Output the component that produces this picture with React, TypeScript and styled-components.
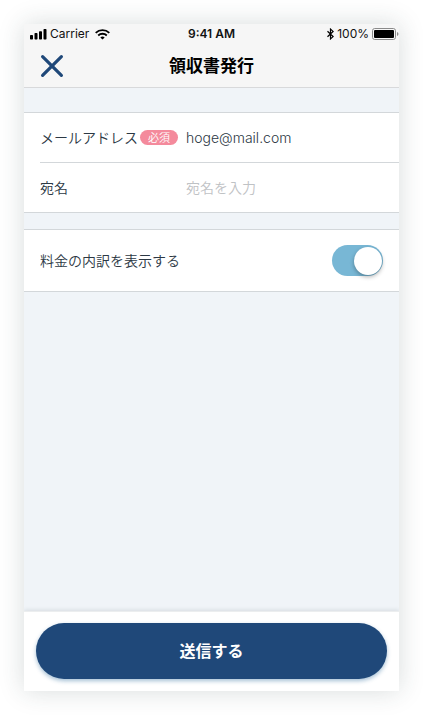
import React, { useState } from "react";
import styled, { createGlobalStyle } from "styled-components";

const GlobalStyle = createGlobalStyle`
  *, *::before, *::after { box-sizing: border-box; }
  body {
    margin: 0;
    background: #fff;
    color: #2c3844;
    font-family: Inter, "Noto Sans CJK JP", sans-serif;
    font-size: 14px;
    line-height: 20px;
  }
  button, input { font: inherit; color: inherit; }
`;

const Page = styled.div`
  display: flex;
  min-height: 100vh;
  padding: 24px;
`;

const Screen = styled.form`
  flex: 1;
  min-width: 0;
  display: flex;
  flex-direction: column;
  background: #f0f4f8;
  box-shadow: 0 0 24px rgba(40, 60, 60, 0.18);
`;

const Header = styled.header`
  background: #f6f6f6;
  border-bottom: 1px solid #d8d9db;
`;

const StatusBar = styled.div`
  display: grid;
  grid-template-columns: 1fr auto 1fr;
  align-items: center;
  height: 20px;
  padding: 0 0 0 6px;
  color: #111;
  font-size: 12px;
`;

const StatusGroup = styled.div<{ $end?: boolean }>`
  display: flex;
  align-items: center;
  justify-content: ${(p) => (p.$end ? "flex-end" : "flex-start")};
  gap: 3px;

  svg { flex: none; }
`;

const Carrier = styled.span`
  margin-right: 3px;
`;

const Clock = styled.time`
  margin-right: 6px;
  font-weight: 600;
`;

const NavBar = styled.div`
  display: grid;
  grid-template-columns: 56px 1fr 56px;
  align-items: center;
  height: 43px;
`;

const CloseButton = styled.button`
  display: flex;
  align-items: center;
  justify-content: center;
  width: 56px;
  height: 43px;
  padding: 0;
  border: 0;
  background: none;
  cursor: pointer;
`;

const Title = styled.h1`
  margin: 0;
  padding-bottom: 2px;
  color: #000;
  font-family: "Noto Sans CJK JP", sans-serif;
  font-size: 17px;
  font-weight: 700;
  line-height: 24px;
  text-align: center;
`;

const Content = styled.main`
  flex: 1;
  display: flex;
  flex-direction: column;
  gap: 16px;
  padding: 24px 0 16px;
`;

const Group = styled.section`
  padding-left: 16px;
  background: #fff;
  border: solid #d3d7da;
  border-width: 1px 0;
`;

const Row = styled.div`
  display: grid;
  grid-template-columns: 138px 1fr;
  gap: 8px;
  align-items: center;
  height: 49px;
  padding-right: 16px;

  & + & {
    height: 50px;
    border-top: 1px solid #d3d7da;
  }
`;

const FieldLabel = styled.label`
  display: flex;
  align-items: center;
  justify-content: space-between;
  font-weight: 350;
  white-space: nowrap;
`;

const Badge = styled.span`
  width: 38px;
  border-radius: 8px;
  background: #f48a9c;
  color: #fff;
  font-family: "Noto Sans CJK JP", sans-serif;
  font-size: 11px;
  line-height: 15px;
  text-align: center;
`;

const TextInput = styled.input`
  width: 100%;
  min-width: 0;
  padding: 0;
  border: 0;
  outline: 0;
  background: none;
  font-weight: 350;

  &::placeholder { color: #bfc2c5; opacity: 1; }
`;

const SwitchRow = styled.div`
  display: flex;
  align-items: center;
  justify-content: space-between;
  height: 61px;
  padding-right: 16px;
`;

const Switch = styled.input`
  appearance: none;
  display: flex;
  align-items: center;
  justify-content: flex-start;
  width: 51px;
  height: 31px;
  margin: 0;
  padding: 0 1px 0 2px;
  border-radius: 16px;
  background: #c8d0d5;
  cursor: pointer;

  &::before {
    content: "";
    width: 28px;
    height: 28px;
    border-radius: 50%;
    background: #fff;
    box-shadow: 0 2px 4px rgba(0, 0, 0, 0.3);
  }

  &:checked {
    justify-content: flex-end;
    background: #78b7d5;
  }
`;

const Footer = styled.footer`
  padding: 11px 12px 12px;
  background: #fff;
  border-top: 1px solid #eceeef;
  box-shadow: 0 -1px 4px rgba(30, 50, 60, 0.12);
  clip-path: inset(-6px 0 0 0);
`;

const SubmitButton = styled.button`
  display: block;
  width: 100%;
  height: 56px;
  padding: 0 0 2px;
  border: 0;
  border-radius: 28px;
  background: #1f4879;
  box-shadow: 0 2px 4px rgba(31, 98, 150, 0.4);
  color: #fff;
  font-family: "Noto Sans CJK JP", sans-serif;
  font-size: 16px;
  font-weight: 700;
  cursor: pointer;
`;

function SignalIcon() {
  return (
    <svg width="17" height="11" viewBox="0 0 17 11" fill="#000" aria-hidden="true">
      <rect x="0" y="6" width="3" height="4.5" rx="0.7" />
      <rect x="4.5" y="4" width="3" height="6.5" rx="0.7" />
      <rect x="9" y="2.2" width="3" height="8.3" rx="0.7" />
      <rect x="13.5" y="0" width="3" height="10.5" rx="0.7" />
    </svg>
  );
}

function WifiIcon() {
  return (
    <svg width="15" height="11" viewBox="0 0 15 11" fill="none" stroke="#000" strokeWidth="1.8" aria-hidden="true">
      <path d="M.7 3.9a9.8 9.8 0 0 1 13.6 0" />
      <path d="M3.2 6.5a6.2 6.2 0 0 1 8.6 0" />
      <path d="M7.5 10.6 5.3 8.5a3.2 3.2 0 0 1 4.4 0z" fill="#000" stroke="none" />
    </svg>
  );
}

function BluetoothIcon() {
  return (
    <svg width="7" height="12" viewBox="0 0 7 12" fill="none" stroke="#000" strokeWidth="1.2" aria-hidden="true">
      <path d="M.5 3.3 6.1 8.6 3.5 10.9V1.1L6.1 3.4.5 8.7" />
    </svg>
  );
}

function BatteryIcon() {
  return (
    <svg width="27" height="12" viewBox="0 0 27 12" aria-hidden="true">
      <rect x=".5" y=".5" width="23" height="11" rx="2.2" fill="none" stroke="#8a8a8a" />
      <rect x="2" y="2" width="20" height="8" rx="1" fill="#000" />
      <path d="M25 4v4q1.5-.6 1.5-2T25 4z" fill="#8a8a8a" />
    </svg>
  );
}

function CloseIcon() {
  return (
    <svg width="24" height="24" viewBox="0 0 24 24" fill="none" stroke="#1f4879" strokeWidth="3.2" strokeLinecap="round" aria-hidden="true">
      <path d="m2.6 2.6 18.8 18.8M21.4 2.6 2.6 21.4" />
    </svg>
  );
}

export default function App() {
  const [email, setEmail] = useState("hoge@mail.com");
  const [name, setName] = useState("");
  const [showDetails, setShowDetails] = useState(true);

  return (
    <>
      <GlobalStyle />
      <Page>
        <Screen onSubmit={(e) => e.preventDefault()}>
          <Header>
            <StatusBar>
              <StatusGroup>
                <SignalIcon />
                <Carrier>Carrier</Carrier>
                <WifiIcon />
              </StatusGroup>
              <Clock>9:41 AM</Clock>
              <StatusGroup $end>
                <BluetoothIcon />
                <span>100%</span>
                <BatteryIcon />
              </StatusGroup>
            </StatusBar>
            <NavBar>
              <CloseButton type="button" aria-label="閉じる">
                <CloseIcon />
              </CloseButton>
              <Title>領収書発行</Title>
            </NavBar>
          </Header>
          <Content>
            <Group>
              <Row>
                <FieldLabel htmlFor="email">
                  メールアドレス
                  <Badge>必須</Badge>
                </FieldLabel>
                <TextInput id="email" type="email" value={email} onChange={(e) => setEmail(e.target.value)} />
              </Row>
              <Row>
                <FieldLabel htmlFor="name">宛名</FieldLabel>
                <TextInput
                  id="name"
                  type="text"
                  placeholder="宛名を入力"
                  value={name}
                  onChange={(e) => setName(e.target.value)}
                />
              </Row>
            </Group>
            <Group>
              <SwitchRow>
                <FieldLabel htmlFor="details">料金の内訳を表示する</FieldLabel>
                <Switch
                  id="details"
                  type="checkbox"
                  role="switch"
                  checked={showDetails}
                  onChange={(e) => setShowDetails(e.target.checked)}
                />
              </SwitchRow>
            </Group>
          </Content>
          <Footer>
            <SubmitButton type="submit">送信する</SubmitButton>
          </Footer>
        </Screen>
      </Page>
    </>
  );
}
